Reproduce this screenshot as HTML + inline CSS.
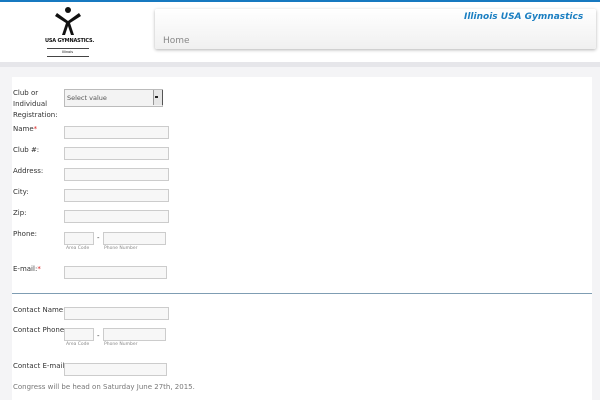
<!DOCTYPE html>
<html><head><style>
body{margin:0;width:600px;height:400px;overflow:hidden;background:#f4f4f6;font-family:"DejaVu Sans",sans-serif;font-size:7px;color:#333;position:relative}
.a{position:absolute}
.in{position:absolute;left:64px;width:103px;height:11px;border:1px solid #ccc;background:#f7f7f7}
.lb{position:absolute;left:13px}
.r{color:#d22}
.sm{position:absolute;font-size:4.5px;color:#888}
</style></head><body>
<div class="a" style="left:0;top:0;width:600px;height:2px;background:#1779c0"></div>
<div class="a" style="left:0;top:2px;width:600px;height:60px;background:#fff"></div>
<div class="a" style="left:0;top:62px;width:600px;height:5px;background:#e6e6ea"></div>
<svg class="a" style="left:55px;top:6px" width="26" height="30" viewBox="0 0 26 30">
<circle cx="13" cy="4" r="3" fill="#111"/>
<path d="M2 7 L13 15 L24 7 L26 10 L15 17 L19 29 L16 29 L13 20 L10 29 L7 29 L11 17 L0 10Z" fill="#111"/>
</svg>
<div class="a" style="left:45px;top:38px;font-size:5px;font-weight:bold;letter-spacing:-0.2px;color:#111">USA GYMNASTICS.</div>
<div class="a" style="left:47px;top:48px;width:42px;border-top:1px solid #444"></div>
<div class="a" style="left:62px;top:50px;font-size:3.5px;color:#111">Illinois</div>
<div class="a" style="left:47px;top:56px;width:42px;border-top:1px solid #444"></div>
<div class="a" style="left:155px;top:9px;width:441px;height:40px;background:linear-gradient(#fff,#f0f0f0);box-shadow:0 1px 3px rgba(0,0,0,.3);border-radius:2px"></div>
<div class="a" style="left:464px;top:12px;font-size:9px;font-weight:bold;font-style:italic;color:#1b7fc2">Illinois USA Gymnastics</div>
<div class="a" style="left:163px;top:36px;font-size:9px;color:#888">Home</div>
<div class="a" style="left:12px;top:77px;width:580px;height:323px;background:#fff"></div>
<div class="lb" style="top:88px;line-height:11px">Club or<br>Individual<br>Registration:</div>
<div class="a" style="left:64px;top:89px;width:97px;height:16px;border:1px solid #bbb;background:#f3f3f3"></div>
<div class="a" style="left:67px;top:94px;font-size:6.5px;color:#555">Select value</div>
<div class="a" style="left:153px;top:90px;width:8px;height:15px;background:#e6e6e6;border-left:1px solid #999;border-right:1px solid #555"></div>
<div class="a" style="left:155px;top:96px;width:3px;height:2px;background:#222"></div>
<div class="lb" style="top:125px">Name<span class="r">*</span></div><div class="in" style="top:126px"></div>
<div class="lb" style="top:146px">Club #:</div><div class="in" style="top:147px"></div>
<div class="lb" style="top:167px">Address:</div><div class="in" style="top:168px"></div>
<div class="lb" style="top:188px">City:</div><div class="in" style="top:189px"></div>
<div class="lb" style="top:209px">Zip:</div><div class="in" style="top:210px"></div>
<div class="lb" style="top:230px">Phone:</div>
<div class="in" style="top:232px;width:28px"></div><div class="a" style="left:97px;top:234px">-</div>
<div class="in" style="top:232px;left:103px;width:61px"></div>
<div class="sm" style="left:66px;top:246px">Area Code</div><div class="sm" style="left:104px;top:246px">Phone Number</div>
<div class="lb" style="top:265px">E-mail:<span class="r">*</span></div><div class="in" style="top:266px;width:101px"></div>
<div class="a" style="left:12px;top:293px;width:580px;height:1px;background:#7f9db3"></div>
<div class="lb" style="top:306px">Contact Name:</div><div class="in" style="top:307px"></div>
<div class="lb" style="top:326px">Contact Phone</div>
<div class="in" style="top:328px;width:28px"></div><div class="a" style="left:97px;top:332px">-</div>
<div class="in" style="top:328px;left:103px;width:61px"></div>
<div class="sm" style="left:66px;top:342px">Area Code</div><div class="sm" style="left:104px;top:342px">Phone Number</div>
<div class="lb" style="top:362px">Contact E-mail:</div><div class="in" style="top:363px;width:101px"></div>
<div class="lb" style="top:383px;color:#777">Congress will be head on Saturday June 27th, 2015.</div>
</body></html>
